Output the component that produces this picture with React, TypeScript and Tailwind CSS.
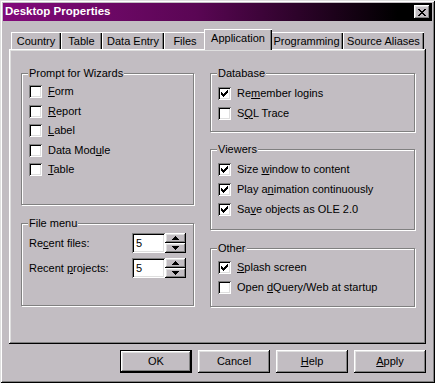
const face = "bg-[#c2bdc2]";
const raised =
  "shadow-[inset_-1px_-1px_0_#000,inset_1px_1px_0_#fff,inset_-2px_-2px_0_#808080,inset_2px_2px_0_#dfdfdf]";
const sunken =
  "shadow-[inset_1px_1px_0_#808080,inset_-1px_-1px_0_#fff,inset_2px_2px_0_#000,inset_-2px_-2px_0_#dfdfdf]";

type TabProps = { label: string; width: string; selected?: boolean };

function Tab({ label, width, selected }: TabProps) {
  if (selected) {
    return (
      <div
        className={`relative z-10 -mx-[2px] -mb-[1px] flex h-[21px] items-center justify-center pb-[2px] ${width} ${face} shadow-[inset_1px_1px_0_#fff,inset_-1px_0_0_#000,inset_-2px_0_0_#808080]`}
      >
        {label}
      </div>
    );
  }

  return (
    <div
      className={`flex h-[17px] items-center justify-center pt-[1px] ${width} shadow-[inset_1px_1px_0_#fff,inset_-1px_0_0_#000,inset_-2px_0_0_#808080]`}
    >
      {label}
    </div>
  );
}

function Check({ checked }: { checked?: boolean }) {
  return (
    <span
      className={`flex h-[13px] w-[13px] shrink-0 items-center justify-center bg-white ${sunken}`}
    >
      {checked && (
        <svg width="7" height="7" viewBox="0 0 7 7" shapeRendering="crispEdges">
          <path
            fill="#000"
            d="M6 0h1v1h-1z M5 1h2v1h-2z M0 2h1v1h-1z M4 2h3v1h-3z M0 3h2v1h-2z M3 3h3v1h-3z M0 4h5v1h-5z M1 5h3v1h-3z M2 6h1v1h-1z"
          />
        </svg>
      )}
    </span>
  );
}

type RowProps = { checked?: boolean; children: React.ReactNode; tall?: boolean };

function CheckRow({ checked, children, tall }: RowProps) {
  return (
    <div className={`flex items-center pl-[7px] ${tall ? "h-[20px]" : "h-[19.5px]"}`}>
      <Check checked={checked} />
      <span className="ml-[6px] leading-[13px]">{children}</span>
    </div>
  );
}

type GroupProps = { title: string; height: string; children: React.ReactNode };

function Group({ title, height, children }: GroupProps) {
  return (
    <div
      className={`flex flex-col border border-[#808080] shadow-[inset_1px_1px_0_#fff,1px_1px_0_#fff] ${height}`}
    >
      <span className={`-mt-[7px] ml-[6px] h-[13px] w-fit px-[1px] leading-[13px] ${face}`}>
        {title}
      </span>
      {children}
    </div>
  );
}

function Arrow({ up }: { up?: boolean }) {
  return (
    <svg width="7" height="4" viewBox="0 0 7 4" shapeRendering="crispEdges">
      <path
        fill="#000"
        d={up ? "M3 0h1v1h-1z M2 1h3v1h-3z M1 2h5v1h-5z M0 3h7v1h-7z" : "M0 0h7v1h-7z M1 1h5v1h-5z M2 2h3v1h-3z M3 3h1v1h-1z"}
      />
    </svg>
  );
}

function Spinner({ label }: { label: React.ReactNode }) {
  return (
    <div className="flex h-[20px] items-center pl-[7px]">
      <span className="w-[103px] leading-[13px]">{label}</span>
      <div className={`flex h-[20px] w-[33px] items-center bg-white pl-[4px] ${sunken}`}>5</div>
      <div className="flex h-[20px] w-[21px] flex-col">
        <div className={`flex h-[10px] items-center justify-center ${face} ${raised}`}>
          <Arrow up />
        </div>
        <div className={`flex h-[10px] items-center justify-center ${face} ${raised}`}>
          <Arrow />
        </div>
      </div>
    </div>
  );
}

function DialogButton({ children, isDefault }: { children: React.ReactNode; isDefault?: boolean }) {
  return (
    <button
      type="button"
      className={`h-[23px] w-[72px] ${isDefault ? "border border-black" : ""} ${face}`}
    >
      <span className={`flex h-full w-full items-center justify-center ${raised}`}>
        {children}
      </span>
    </button>
  );
}

export default function App() {
  return (
    <div
      className={`flex h-[383px] w-[435px] flex-col p-[3px] font-['Liberation_Sans',Arial,sans-serif] text-[11px] text-black ${face} shadow-[inset_1px_1px_0_#dfdfdf,inset_-1px_-1px_0_#000,inset_2px_2px_0_#fff,inset_-2px_-2px_0_#808080]`}
    >
      <div className="flex h-[18px] items-center justify-between bg-[linear-gradient(to_right,#820a7a,#5a0654_45%,#000_92%)] pl-[2px] pr-[2px]">
        <span className="text-[11.5px] font-bold text-white">Desktop Properties</span>
        <div className={`flex h-[14px] w-[16px] items-center justify-center ${face} ${raised}`}>
          <svg width="8" height="7" viewBox="0 0 8 7" shapeRendering="crispEdges">
            <path
              fill="#000"
              d="M0 0h2v1h-2z M6 0h2v1h-2z M1 1h2v1h-2z M5 1h2v1h-2z M2 2h4v1h-4z M3 3h2v1h-2z M2 4h4v1h-4z M1 5h2v1h-2z M5 5h2v1h-2z M0 6h2v1h-2z M6 6h2v1h-2z"
            />
          </svg>
        </div>
      </div>

      <div className="mt-[8px] flex h-[20px] items-end pl-[8px]">
        <Tab label="Country" width="w-[50px]" />
        <Tab label="Table" width="w-[41px]" />
        <Tab label="Data Entry" width="w-[62px]" />
        <Tab label="Files" width="w-[42px]" />
        <Tab label="Application" width="w-[68px]" selected />
        <Tab label="Programming" width="w-[73px]" />
        <Tab label="Source Aliases" width="w-[81px]" />
      </div>

      <div className={`ml-[6px] flex h-[295px] w-[417px] gap-[16px] pl-[12px] pt-[24px] ${raised}`}>
        <div className="flex w-[173px] flex-col gap-[18px]">
          <Group title="Prompt for Wizards" height="h-[132px]">
            <div className="mt-[2px] flex flex-col">
              <CheckRow>
                <u>F</u>orm
              </CheckRow>
              <CheckRow>
                <u>R</u>eport
              </CheckRow>
              <CheckRow>
                <u>L</u>abel
              </CheckRow>
              <CheckRow>
                Data Mod<u>u</u>le
              </CheckRow>
              <CheckRow>
                <u>T</u>able
              </CheckRow>
            </div>
          </Group>

          <Group title="File menu" height="h-[83px]">
            <div className="mt-[3px] flex flex-col gap-[5px]">
              <Spinner
                label={
                  <>
                    Re<u>c</u>ent files:
                  </>
                }
              />
              <Spinner
                label={
                  <>
                    Recent <u>p</u>rojects:
                  </>
                }
              />
            </div>
          </Group>
        </div>

        <div className="flex w-[205px] flex-col">
          <Group title="Database" height="h-[59px]">
            <div className="mt-[3px] flex flex-col">
              <CheckRow checked tall>
                Re<u>m</u>ember logins
              </CheckRow>
              <CheckRow tall>
                S<u>Q</u>L Trace
              </CheckRow>
            </div>
          </Group>

          <div className="mt-[17px]">
            <Group title="Viewers" height="h-[81px]">
              <div className="mt-[3px] flex flex-col">
                <CheckRow checked tall>
                  Size <u>w</u>indow to content
                </CheckRow>
                <CheckRow checked tall>
                  Play a<u>n</u>imation continuously
                </CheckRow>
                <CheckRow checked tall>
                  Sa<u>v</u>e objects as OLE 2.0
                </CheckRow>
              </div>
            </Group>
          </div>

          <div className="mt-[18px]">
            <Group title="Other" height="h-[59px]">
              <div className="mt-[2px] flex flex-col">
                <CheckRow checked tall>
                  <u>S</u>plash screen
                </CheckRow>
                <CheckRow tall>
                  Open <u>d</u>Query/Web at startup
                </CheckRow>
              </div>
            </Group>
          </div>
        </div>
      </div>

      <div className="mt-[6px] flex justify-end gap-[6px] pr-[6px]">
        <DialogButton isDefault>OK</DialogButton>
        <DialogButton>Cancel</DialogButton>
        <DialogButton>
          <u>H</u>elp
        </DialogButton>
        <DialogButton>
          <u>A</u>pply
        </DialogButton>
      </div>
    </div>
  );
}
